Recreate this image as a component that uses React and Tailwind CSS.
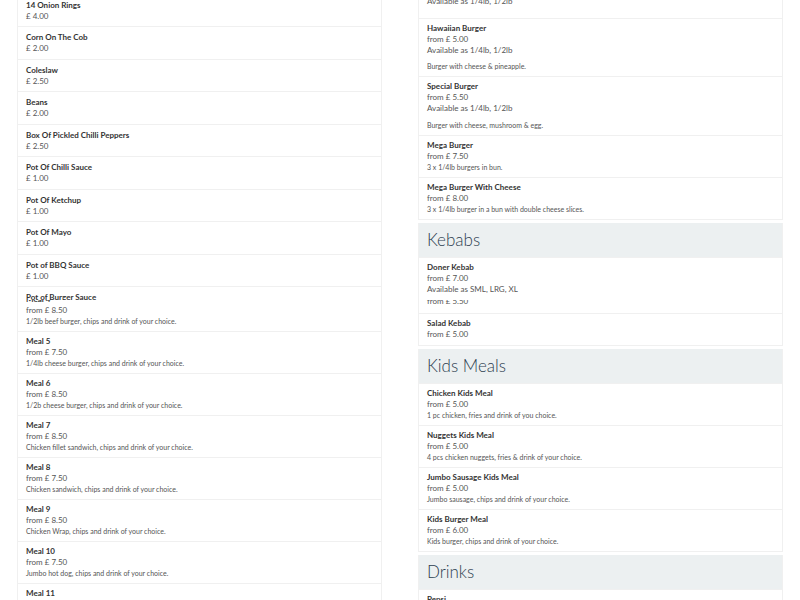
import React from 'react';

const sides = [
  ['14 Onion Rings', '£ 4.00'],
  ['Corn On The Cob', '£ 2.00'],
  ['Coleslaw', '£ 2.50'],
  ['Beans', '£ 2.00'],
  ['Box Of Pickled Chilli Peppers', '£ 2.50'],
  ['Pot Of Chilli Sauce', '£ 1.00'],
  ['Pot Of Ketchup', '£ 1.00'],
  ['Pot Of Mayo', '£ 1.00'],
  ['Pot of BBQ Sauce', '£ 1.00'],
  ['Pot of Burger Sauce', '£ 1.00'],
];

const meals = [
  ['Meal 4', '8.50', '1/2lb beef burger, chips and drink of your choice.'],
  ['Meal 5', '7.50', '1/4lb cheese burger, chips and drink of your choice.'],
  ['Meal 6', '8.50', '1/2b cheese burger, chips and drink of your choice.'],
  ['Meal 7', '8.50', 'Chicken fillet sandwich, chips and drink of your choice.'],
  ['Meal 8', '7.50', 'Chicken sandwich, chips and drink of your choice.'],
  ['Meal 9', '8.50', 'Chicken Wrap, chips and drink of your choice.'],
  ['Meal 10', '7.50', 'Jumbo hot dog, chips and drink of your choice.'],
  ['Meal 11', '8.00', 'Chicken burger, chips and drink of your choice.'],
];

const burgers = [
  { name: 'Cheese Burger', price: '4.50', avail: '1/4lb, 1/2lb' },
  { name: 'Hawaiian Burger', price: '5.00', avail: '1/4lb, 1/2lb', desc: 'Burger with cheese & pineapple.' },
  { name: 'Special Burger', price: '5.50', avail: '1/4lb, 1/2lb', desc: 'Burger with cheese, mushroom & egg.' },
  { name: 'Mega Burger', price: '7.50', desc: '3 x 1/4lb burgers in bun.' },
  { name: 'Mega Burger With Cheese', price: '8.00', desc: '3 x 1/4lb burger in a bun with double cheese slices.' },
];

const kids = [
  ['Chicken Kids Meal', '5.00', '1 pc chicken, fries and drink of you choice.'],
  ['Nuggets Kids Meal', '5.00', '4 pcs chicken nuggets, fries & drink of your choice.'],
  ['Jumbo Sausage Kids Meal', '5.00', 'Jumbo sausage, chips and drink of your choice.'],
  ['Kids Burger Meal', '6.00', 'Kids burger, chips and drink of your choice.'],
];

const Title = ({ children }) => (
  <div className="text-[8px] leading-[11px] font-bold text-[#333333]">{children}</div>
);
const Line = ({ children, className = '' }) => (
  <div className={'text-[8px] leading-[11px] text-[#555555] ' + className}>{children}</div>
);
const Desc = ({ children }) => (
  <div className="text-[7px] leading-[10px] text-[#555555]">{children}</div>
);

const Item = ({ name, price, avail, desc }) => (
  <div className="border-t border-[#f0f0f0] px-[8px] pt-[4px] pb-[5px]">
    <Title>{name}</Title>
    <Line>{price}</Line>
    {avail && <Line className="mb-[5.5px]">Available as {avail}</Line>}
    {desc && <Desc>{desc}</Desc>}
  </div>
);

const Header = ({ children }) => (
  <div className="h-[34px] bg-[#ecf0f1] px-[8px] flex items-center text-[17px] font-light text-[#2c3e50]">
    {children}
  </div>
);

export default function App() {
  return (
    <div
      className="h-[600px] w-[800px] overflow-hidden bg-white flex gap-[36px] px-[17px]"
      style={{ fontFamily: 'Lato, "Open Sans", sans-serif' }}
    >
      {/* left column */}
      <div className="w-[365px] shrink-0 mt-[-6.5px] border-x border-[#f0f0f0]">
        <div className="h-[306.5px] overflow-hidden">
          {sides.map(([n, p]) => (
            <div key={n} className="border-t border-[#f0f0f0] px-[8px] pt-[5px] pb-[4.5px]">
              <Title>{n}</Title>
              <Line>{p}</Line>
            </div>
          ))}
        </div>
        <div className="h-[310px] overflow-hidden">
          <div className="mt-[-11px]">
            {meals.map(([n, p, d]) => (
              <Item key={n} name={n} price={'from £ ' + p} desc={d} />
            ))}
          </div>
        </div>
      </div>

      {/* right column */}
      <div className="w-[365px] shrink-0 mt-[-31px] flex flex-col gap-[3px]">
        <div className="border-x border-b border-[#f0f0f0]">
          {burgers.map((b) => (
            <Item key={b.name} name={b.name} price={'from £ ' + b.price} avail={b.avail} desc={b.desc} />
          ))}
        </div>

        <div className="border-x border-b border-[#f0f0f0]">
          <Header>Kebabs</Header>
          <div className="h-[43px] overflow-hidden">
            <Item name="Doner Kebab" price="from £ 7.00" avail="SML, LRG, XL" />
          </div>
          <div className="h-[13px] overflow-hidden flex flex-col justify-end">
            <div className="px-[8px] pb-[5.5px]">
              <Title>Shish Kebab</Title>
              <Line>from £ 5.50</Line>
            </div>
          </div>
          <Item name="Salad Kebab" price="from £ 5.00" />
        </div>

        <div className="border-x border-b border-[#f0f0f0]">
          <Header>Kids Meals</Header>
          {kids.map(([n, p, d]) => (
            <Item key={n} name={n} price={'from £ ' + p} desc={d} />
          ))}
        </div>

        <div className="border-x border-b border-[#f0f0f0]">
          <Header>Drinks</Header>
          <Item name="Pepsi" price="£ 1.00" />
        </div>
      </div>
    </div>
  );
}
